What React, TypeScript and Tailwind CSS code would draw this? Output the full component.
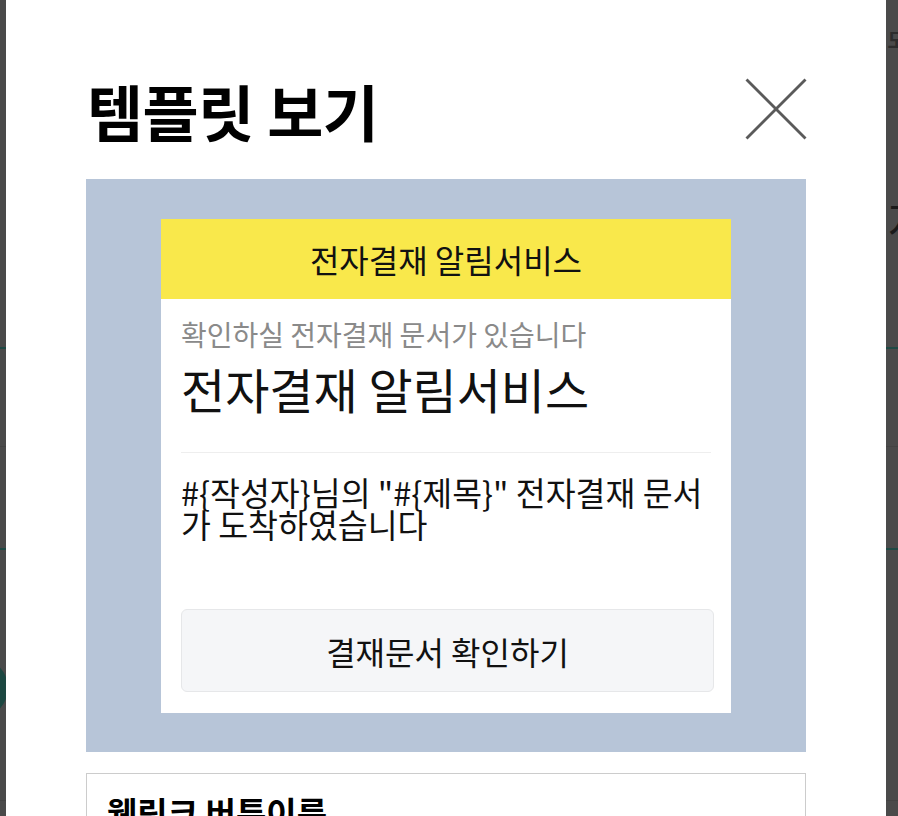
import React from "react";

const font = { fontFamily: '"Noto Sans CJK KR", "Noto Sans", sans-serif' };

function CloseIcon() {
  return (
    <svg width="62" height="62" viewBox="0 0 62 62" fill="none">
      <line x1="1.5" y1="1.5" x2="60.5" y2="60.5" stroke="#5a5a5a" strokeWidth="2.8" />
      <line x1="60.5" y1="1.5" x2="1.5" y2="60.5" stroke="#5a5a5a" strokeWidth="2.8" />
    </svg>
  );
}

export default function App() {
  return (
    <div className="relative h-[816px] w-full overflow-hidden bg-[#4a4a4a]" style={font}>
      {/* background page under the overlay */}
      <div className="flex flex-col">
        <div className="h-[30px]" />
        <div className="flex justify-end pr-0 h-[20px]">
          <span className="text-[20px] leading-[20px] font-bold text-[#2c2c2c] mr-[-8px]">도</span>
        </div>
        <div className="h-[145px]" />
        <div className="flex justify-end h-[50px]">
          <span className="text-[44px] leading-[50px] text-[#1a1a1a] mr-[-30px]">지</span>
        </div>
        <div className="h-[102px]" />
        <div className="h-[2px] bg-[#1f4a45]" />
        <div className="h-[97px]" />
        <div className="h-[1px] bg-[#434343]" />
        <div className="h-[101px]" />
        <div className="h-[2px] bg-[#1f4a45]" />
        <div className="h-[108px]" />
        <div className="flex h-[60px]">
          <div className="h-[60px] w-[60px] rounded-full bg-[#1c4741] ml-[-52px]" />
        </div>
        <div className="h-[82px]" />
        <div className="h-[1px] bg-[#434343]" />
      </div>

      {/* modal */}
      <div className="absolute left-[6px] top-0 w-[880px] h-[816px] bg-white px-[80px] pt-[70px]">
        <div className="flex h-[80px] items-center justify-between">
          <h1 className="text-[61px] leading-none font-bold text-black tracking-[-0.5px] ml-[1px] mt-[1px]">템플릿 보기</h1>
          <div className="mt-[-2px] mr-[-1px]">
            <CloseIcon />
          </div>
        </div>

        <div className="mt-[29px] bg-[#b7c5d8] pt-[40px] pb-[39px] px-[75px]">
          <div className="bg-white">
            <div className="flex h-[80px] items-center justify-center bg-[#f9e84b] text-[32px] text-[#111111]">
              전자결재 알림서비스
            </div>
            <div className="px-[20px] pt-[20px] pb-[21px]">
              <div className="text-[28px] leading-[30px] text-[#8a8a8a]">확인하실 전자결재 문서가 있습니다</div>
              <div className="mt-[13px] text-[48px] leading-[53px] text-[#111111]">전자결재 알림서비스</div>
              <div className="mt-[37px] h-[1px] bg-[#eeeeee]" />
              <div className="mt-[23px] text-[32.5px] leading-[32px] text-[#111111]">
                #{"{"}작성자{"}"}님의 "#{"{"}제목{"}"}" 전자결재 문서가 도착하였습니다
              </div>
              <div className="mt-[69px] flex h-[83px] w-[533px] items-center justify-center rounded-[6px] border border-[#e6e7e9] bg-[#f5f6f8] text-[32px] text-[#111111]">
                결재문서 확인하기
              </div>
            </div>
          </div>
        </div>

        <div className="mt-[21px] border border-[#cccccc] px-[20px] pt-[18px] h-[200px]">
          <div className="text-[33px] leading-[40px] font-bold text-black">웹링크 버튼이름</div>
        </div>
      </div>
    </div>
  );
}
